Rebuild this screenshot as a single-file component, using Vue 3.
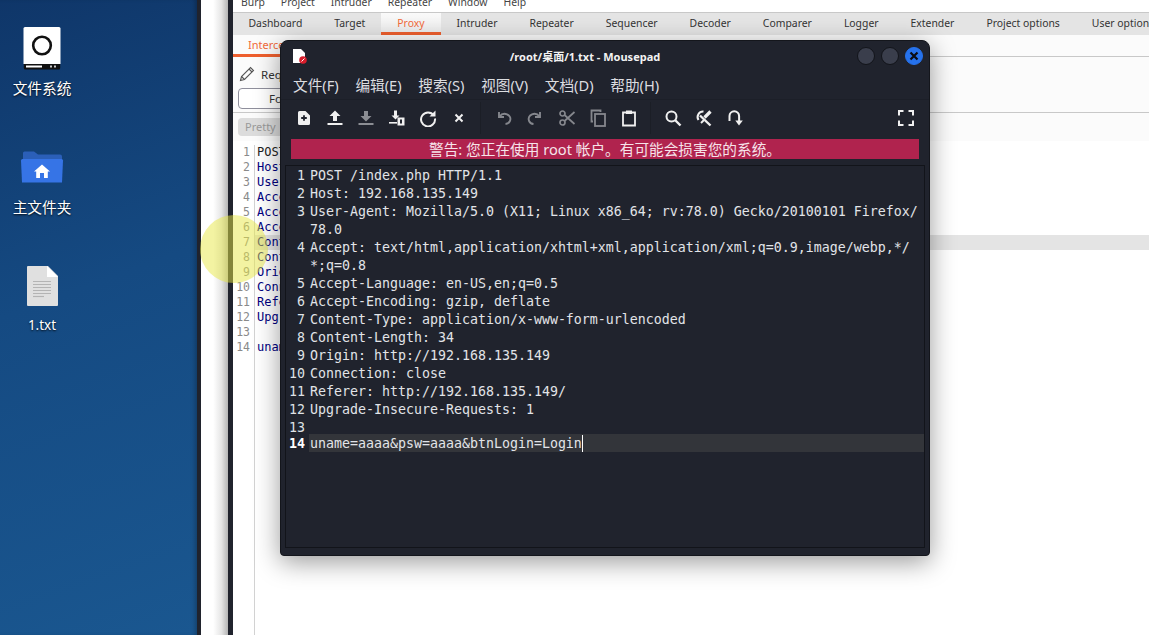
<script setup>
const tabs = ['Dashboard','Target','Proxy','Intruder','Repeater','Sequencer','Decoder','Comparer','Logger','Extender','Project options','User options']
const burpMenu = ['Burp','Project','Intruder','Repeater','Window','Help']
const reqLines = ['POST','Host','User','Acce','Acce','Acce','Cont','Cont','Orig','Conn','Refe','Upgr','','unam']
const menu = ['文件(F)','编辑(E)','搜索(S)','视图(V)','文档(D)','帮助(H)']
const rows = [
  ['1','POST /index.php HTTP/1.1'],
  ['2','Host: 192.168.135.149'],
  ['3','User-Agent: Mozilla/5.0 (X11; Linux x86_64; rv:78.0) Gecko/20100101 Firefox/'],
  ['','78.0'],
  ['4','Accept: text/html,application/xhtml+xml,application/xml;q=0.9,image/webp,*/'],
  ['','*;q=0.8'],
  ['5','Accept-Language: en-US,en;q=0.5'],
  ['6','Accept-Encoding: gzip, deflate'],
  ['7','Content-Type: application/x-www-form-urlencoded'],
  ['8','Content-Length: 34'],
  ['9','Origin: http://192.168.135.149'],
  ['10','Connection: close'],
  ['11','Referer: http://192.168.135.149/'],
  ['12','Upgrade-Insecure-Requests: 1'],
  ['13',''],
]
</script>

<template>
  <div class="screen">
    <aside class="desktop">
      <div class="dicon">
        <svg width="44" height="46" viewBox="0 0 44 46">
          <path d="M5 1h34a1.500 1.500 0 0 1 1.500 1.500V38H3.500V2.500A1.500 1.500 0 0 1 5 1z" fill="#fff"/>
          <path d="M3.800 38h36.400v4a1.500 1.500 0 0 1-1.500 1.500H5.300A1.500 1.500 0 0 1 3.800 42z" fill="#111"/>
          <rect x="6" y="39.500" width="16" height="2" fill="#fff"/>
          <rect x="30" y="39.500" width="2" height="2" fill="#ccc"/><rect x="34" y="39.500" width="2" height="2" fill="#ccc"/>
          <circle cx="22" cy="19.500" r="8.800" fill="none" stroke="#111" stroke-width="2.600"/>
        </svg>
        <span>文件系统</span>
      </div>
      <div class="dicon home">
        <svg width="44" height="33" viewBox="0 0 44 33">
          <path d="M3 2a1.500 1.500 0 0 1 1.500-1.500H14l4 3h22a2 2 0 0 1 2 2V12H3z" fill="#2b5fb8"/>
          <path d="M2.500 8h39a1.500 1.500 0 0 1 1.500 1.500L42 31.500H2L1 9.500A1.500 1.500 0 0 1 2.500 8z" fill="#3674e6"/>
          <path d="M22 13.500l8 7h-2.200v6.500h-3.800v-5h-4v5h-3.800v-6.500H14z" fill="#fff"/>
        </svg>
        <span>主文件夹</span>
      </div>
      <div class="dicon doc">
        <svg width="34" height="42" viewBox="0 0 34 42">
          <path d="M3 1h20l10 10v29a1 1 0 0 1-1 1H3a1 1 0 0 1-1-1V2a1 1 0 0 1 1-1z" fill="#e0e0e0"/>
          <path d="M22 1l11 11H22z" fill="#fff"/>
          <path d="M8 16.500h18M8 19.500h18M8 22.500h18M8 25.500h18M8 28.500h18" stroke="#b4b4b4" stroke-width="1.200"/>
          <path d="M8 31.500h11" stroke="#b4b4b4" stroke-width="1.200"/>
        </svg>
        <span>1.txt</span>
      </div>
    </aside>
    <div class="edge"></div>
    <div class="strip"></div>
    <div class="edge edge2"></div>

    <main class="burp">
      <nav class="burp-menu">
        <span v-for="m in burpMenu" :key="m">{{ m }}</span>
      </nav>
      <nav class="burp-tabs">
        <span v-for="t in tabs" :key="t" class="tab" :class="{ active: t === 'Proxy' }">{{ t }}</span>
      </nav>
      <div class="subtabs"><span class="subtab">Intercept</span></div>
      <div class="req-bar">
        <div class="req-line">
          <svg width="16" height="16" viewBox="0 0 16 16" fill="none" stroke="#555" stroke-width="1.100">
            <path d="M1.500 14.500l1-4L11.500 1.500l3 3-9 9z"/><path d="M2.500 10.500l3 3"/><path d="M10 3l3 3"/>
          </svg>
          <span>Req</span>
        </div>
        <button class="forward">Fo</button>
      </div>
      <div class="pretty-bar"><span class="pretty">Pretty</span></div>
      <div class="code">
        <div v-for="(l, i) in reqLines" :key="i" class="code-row" :class="{ hl: i === 6 }">
          <span class="cn">{{ i + 1 }}</span>
          <span class="ct" :class="{ first: i === 0 }">{{ l }}</span>
        </div>
        <div class="gutter-fill"></div>
      </div>
    </main>

    <div class="click-dot"></div>

    <section class="win">
      <header class="title">
        <svg class="app" width="16" height="16" viewBox="0 0 16 16">
          <path d="M1 1h8l4 4v10H1z" fill="#fff"/>
          <circle cx="11" cy="12" r="3.800" fill="#d81e2c"/>
          <path d="M9.500 13.500l3-3" stroke="#fff" stroke-width="1"/>
        </svg>
        <span class="title-text">/root/桌面/1.txt - Mousepad</span>
        <div class="wbtns">
          <i class="wb"></i><i class="wb"></i>
          <i class="wb close">
            <svg width="10" height="10" viewBox="0 0 10 10"><path d="M1.500 1.500l7 7M8.500 1.500l-7 7" stroke="#0b0d14" stroke-width="2.200"/></svg>
          </i>
        </div>
      </header>
      <nav class="menu"><span v-for="m in menu" :key="m">{{ m }}</span></nav>
      <div class="toolbar">
        <span class="tb"><svg width="18" height="18" viewBox="0 0 18 18"><path d="M4.500 2h6l4.500 4.500v8A1.500 1.500 0 0 1 13.500 16h-9A1.500 1.500 0 0 1 3 14.500v-11A1.500 1.500 0 0 1 4.500 2z" fill="#f0f0f0"/><path d="M9 6.200v5.600M6.200 9h5.600" stroke="#20232d" stroke-width="1.800"/></svg></span>
        <span class="tb"><svg width="18" height="18" viewBox="0 0 18 18" fill="#f0f0f0"><path d="M9 1.500l5.500 5.500H11v5H7V7H3.500z"/><rect x="1.500" y="14" width="15" height="2"/></svg></span>
        <span class="tb dim"><svg width="18" height="18" viewBox="0 0 18 18" fill="#8b8d93"><path d="M9 12.500L3.500 7H7V2h4v5h3.500z"/><rect x="1.500" y="14" width="15" height="2"/></svg></span>
        <span class="tb"><svg width="18" height="18" viewBox="0 0 18 18" fill="#f0f0f0"><path d="M7.500 10.500L3.500 6.500H6V1.500h3v5h2.500z"/><rect x="1" y="13" width="8" height="1.600"/><path d="M9.500 8.500h7v8h-7z"/><rect x="12" y="10.500" width="2" height="4" fill="#20232d"/></svg></span>
        <span class="tb"><svg width="18" height="18" viewBox="0 0 18 18" fill="none"><path d="M14.800 6.400A7 7 0 1 0 16 9.500" stroke="#f0f0f0" stroke-width="2"/><path d="M16.500 1.500v6h-6z" fill="#f0f0f0"/></svg></span>
        <span class="tb"><svg width="18" height="18" viewBox="0 0 18 18"><path d="M5.500 5.500l7 7M12.500 5.500l-7 7" stroke="#f0f0f0" stroke-width="2"/></svg></span>
        <i class="sep"></i>
        <span class="tb"><svg width="18" height="18" viewBox="0 0 18 18" fill="none" stroke="#85878d" stroke-width="1.900"><path d="M3 3v5h5"/><path d="M3.500 7.500c2-2.600 5-3.200 7.500-2.200 3 1.200 4 4 3 6.500-.8 2-2.500 3-4.500 3.200"/></svg></span>
        <span class="tb"><svg width="18" height="18" viewBox="2 0 18 18" fill="none" stroke="#85878d" stroke-width="1.900"><path d="M15 3v5h-5"/><path d="M14.500 7.500c-2-2.600-5-3.200-7.500-2.200-3 1.200-4 4-3 6.500.8 2 2.500 3 4.500 3.200"/></svg></span>
        <span class="tb"><svg width="18" height="18" viewBox="0 0 18 18" fill="none" stroke="#85878d" stroke-width="1.700"><circle cx="4.500" cy="4.500" r="2.500"/><circle cx="4.500" cy="13.500" r="2.500"/><path d="M6.500 6l10 9M6.500 12l10-9"/></svg></span>
        <span class="tb"><svg width="18" height="18" viewBox="0 0 18 18" fill="none" stroke="#85878d" stroke-width="1.800"><path d="M4 12.500H2.500v-11h9V3"/><rect x="6" y="5" width="10" height="12"/></svg></span>
        <span class="tb"><svg width="18" height="18" viewBox="0 0 18 18" fill="none" stroke="#f0f0f0" stroke-width="1.800"><path d="M6 3.500H3v13h12v-13h-3"/><rect x="6" y="1.500" width="6" height="3.500" fill="#f0f0f0" stroke="none"/></svg></span>
        <i class="sep sep2"></i>
        <span class="tb"><svg width="18" height="18" viewBox="0 0 18 18" fill="none" stroke="#f0f0f0"><circle cx="7.500" cy="7.500" r="5" stroke-width="2"/><path d="M11 11l5.500 5.500" stroke-width="2.400"/></svg></span>
        <span class="tb"><svg width="18" height="18" viewBox="0 0 18 18" fill="none" stroke="#f0f0f0"><path d="M8.500 2.500a5.500 5.500 0 0 0-5 8.500" stroke-width="2"/><path d="M5 6.500l10.500 10" stroke-width="2.400"/><path d="M6 14l3-3" stroke-width="2"/><path d="M9.500 8.500l6-6" stroke-width="3.200"/></svg></span>
        <span class="tb"><svg width="18" height="18" viewBox="0 0 18 18" fill="none"><path d="M3.500 12V7a4.800 4.800 0 0 1 9.600 0v5" stroke="#f0f0f0" stroke-width="2"/><path d="M9.300 11.500h7.500L13 16.500z" fill="#f0f0f0"/></svg></span>
        <span class="grow"></span>
        <span class="tb"><svg width="18" height="18" viewBox="0 0 18 18" fill="none" stroke="#f0f0f0" stroke-width="2"><path d="M2 6.500V2h4.500M11.500 2H16v4.500M16 11.500V16h-4.500M6.500 16H2v-4.500"/></svg></span>
      </div>
      <div class="warn">警告: 您正在使用 root 帐户。有可能会损害您的系统。</div>
      <div class="editor">
        <div v-for="(r, i) in rows" :key="i" class="row">
          <span class="num">{{ r[0] }}</span><span class="txt">{{ r[1] }}</span>
        </div>
        <div class="row current">
          <span class="num cur-num">14</span><span class="txt cur-txt">uname=aaaa&amp;psw=aaaa&amp;btnLogin=Login<i class="caret"></i></span>
        </div>
      </div>
    </section>
  </div>
</template>

<style>
html, body { margin: 0; padding: 0; overflow: hidden; background: #fff; }
</style>

<style scoped>
.screen { position: relative; display: flex; width: 1149px; height: 635px; overflow: hidden; background: #fff; font-family: "Noto Sans", "Noto Sans CJK SC", sans-serif; }

.desktop { width: 197px; flex: none; padding-top: 26px; box-sizing: border-box; display: flex; flex-direction: column; background: linear-gradient(160deg, #0f3669 0%, #154a82 45%, #1a5790 100%); box-shadow: inset -4px 0 4px -2px rgba(0,0,0,.25); }
.dicon { width: 84px; height: 118px; box-sizing: border-box; display: flex; flex-direction: column; align-items: center; color: #fff; font-size: 14.670px; line-height: 20px; text-shadow: 0 1px 2px rgba(0,0,0,.9); font-family: "Noto Sans CJK SC", "Noto Sans", sans-serif; }
.dicon svg { flex: none; }
.dicon span { margin-top: 6px; }
.dicon.home { padding-top: 7px; }
.dicon.home span { margin-top: 13px; }
.dicon.doc { padding-top: 3px; }
.dicon.doc span { margin-top: 8px; font-family: "Noto Sans", sans-serif; font-size: 13.500px; }

.edge { width: 4px; flex: none; background: #20232d; }
.edge2 { width: 5px; }
.strip { width: 27px; flex: none; background: linear-gradient(90deg, #fff 0, #fff 45%, #e6e6e6 75%, #b5b5b5 100%); }

.burp { flex: 1; min-width: 0; display: flex; flex-direction: column; overflow: hidden; background: #fff; font-size: 10.400px; color: #333; }
.burp-menu { height: 12px; flex: none; display: flex; padding-left: 8px; overflow: hidden; color: #444; background: #fff; }
.burp-menu span { margin-top: -5px; line-height: 14px; margin-right: 16px; }
.burp-tabs { height: 22px; flex: none; display: flex; background: #e4e4e4; border-top: 1px solid #c8c8c8; border-bottom: 1px solid #c8c8c8; overflow: hidden; white-space: nowrap; margin-bottom: -1px; }
.tab { padding: 0 16px; line-height: 20px; flex: none; }
.tab:first-child { padding-left: 15.500px; }
.tab.active { color: #f26a3a; background: linear-gradient(#fafafa, #ececec); border-bottom: 3px solid #ee5f2e; height: 19px; }
.subtabs { height: 21px; flex: none; border-bottom: 1px solid #c8c8c8; background: #fbfbfb; }
.subtab { display: inline-block; width: 47px; padding-left: 15px; height: 19px; line-height: 19px; color: #f26a3a; border-bottom: 3px solid #ee5f2e; overflow: hidden; font-size: 11px; }
.req-bar { height: 56px; flex: none; box-sizing: border-box; border-bottom: 1px solid #c8c8c8; background: #fbfbfb; padding: 7px 0 0 6px; }
.req-line { display: flex; align-items: center; gap: 6px; height: 20px; }
.req-line span { font-size: 11.500px; }
.forward { display: block; margin: 4px 0 0 -1px; width: 106px; height: 21px; box-sizing: border-box; border: 1px solid #8f8f9c; border-radius: 4px; background: #fff; font: 11.500px "Noto Sans", sans-serif; color: #333; padding: 0 0 0 30px; text-align: left; }
.pretty-bar { height: 28px; flex: none; background: #fbfbfb; padding: 5px 0 0 5px; box-sizing: border-box; }
.pretty { display: inline-block; height: 18px; line-height: 18px; padding: 0 7px; width: 90px; box-sizing: border-box; background: #dcdcdc; border-radius: 4px; color: #9a9a9a; font-size: 11px; }
.code { flex: 1; display: flex; flex-direction: column; padding-top: 4px; font: 12px/15px "DejaVu Sans Mono", monospace; }
.code-row { display: flex; height: 15px; flex: none; }
.cn { width: 17px; flex: none; text-align: right; padding-right: 4px; border-right: 1px solid #d2d2d2; color: #8a8a8a; font-size: 11.500px; background: #fff; }
.ct { padding-left: 2px; color: #000080; flex: 1; white-space: pre; }
.ct.first { color: #222; }
.hl .ct { background: #e4e4e4; }
.gutter-fill { flex: 1; width: 21px; border-right: 1px solid #d2d2d2; }

.click-dot { position: absolute; left: 200px; top: 215px; width: 68px; height: 68px; border-radius: 50%; background: rgba(232, 232, 70, .5); pointer-events: none; }

.win { position: absolute; left: 280px; top: 40px; width: 650px; height: 516px; box-sizing: border-box; display: flex; flex-direction: column; background: #20232d; border: 1px solid #14161c; border-radius: 8px 8px 4px 4px; box-shadow: 0 6px 26px rgba(0,0,0,.4); color: #e8e8ea; font-family: "Noto Sans", "Noto Sans CJK SC", sans-serif; }
.title { height: 31px; flex: none; position: relative; display: flex; align-items: center; justify-content: center; box-sizing: border-box; padding: 0 40px 2px 0; }
.app { position: absolute; left: 11px; top: 7px; }
.title-text { font-size: 11px; font-weight: 700; color: #f2f2f2; }
.wbtns { position: absolute; right: 6px; top: 6px; display: flex; gap: 6px; }
.wb { width: 18px; height: 18px; box-sizing: border-box; border: 1px solid #12141a; border-radius: 50%; background: #3a3e4c; display: flex; align-items: center; justify-content: center; }
.wb.close { background: #2672ec; border-color: #2672ec; }
.menu { height: 28px; flex: none; display: flex; align-items: center; padding: 0 0 2px 12px; gap: 16.700px; font-size: 14.670px; color: #dcdde0; font-family: "Noto Sans", "Noto Sans CJK SC", sans-serif; border-bottom: 1px solid #1c1f28; box-sizing: border-box; }
.toolbar { height: 36px; flex: none; display: flex; align-items: center; padding-left: 7px; padding-right: 8px; }
.tb { width: 31px; height: 31px; flex: none; display: flex; align-items: center; justify-content: center; }
.sep { width: 1px; height: 32px; background: #1b1e26; margin: 0 8px 0 6px; flex: none; }
.sep2 { margin-right: 6px; }
.grow { flex: 1; }
.warn { height: 20px; flex: none; margin: 3px 10px 0; background: #b0234e; color: #f6e3ea; text-align: center; font-size: 14.670px; line-height: 21px; white-space: pre; font-family: "Noto Sans", "Noto Sans CJK SC", sans-serif; }
.editor { flex: 1; margin: 6px 4px 7px; border: 1px solid #12141a; font: 13.290px/18px "DejaVu Sans Mono", "Liberation Mono", monospace; color: #e2e4e8; padding-top: 1px; }
.row { display: flex; height: 18px; white-space: pre; }
.row.current { margin-top: -3px; line-height: 20px; }
.num { width: 19px; flex: none; text-align: right; padding-right: 4px; color: #dfe1e5; }
.txt { flex: 1; padding-left: 1px; }
.cur-num { font-weight: 700; color: #fff; }
.cur-txt { background: #33353a; height: 18px; }
.caret { display: inline-block; width: 1px; height: 17px; background: #fff; vertical-align: -4px; }
</style>
